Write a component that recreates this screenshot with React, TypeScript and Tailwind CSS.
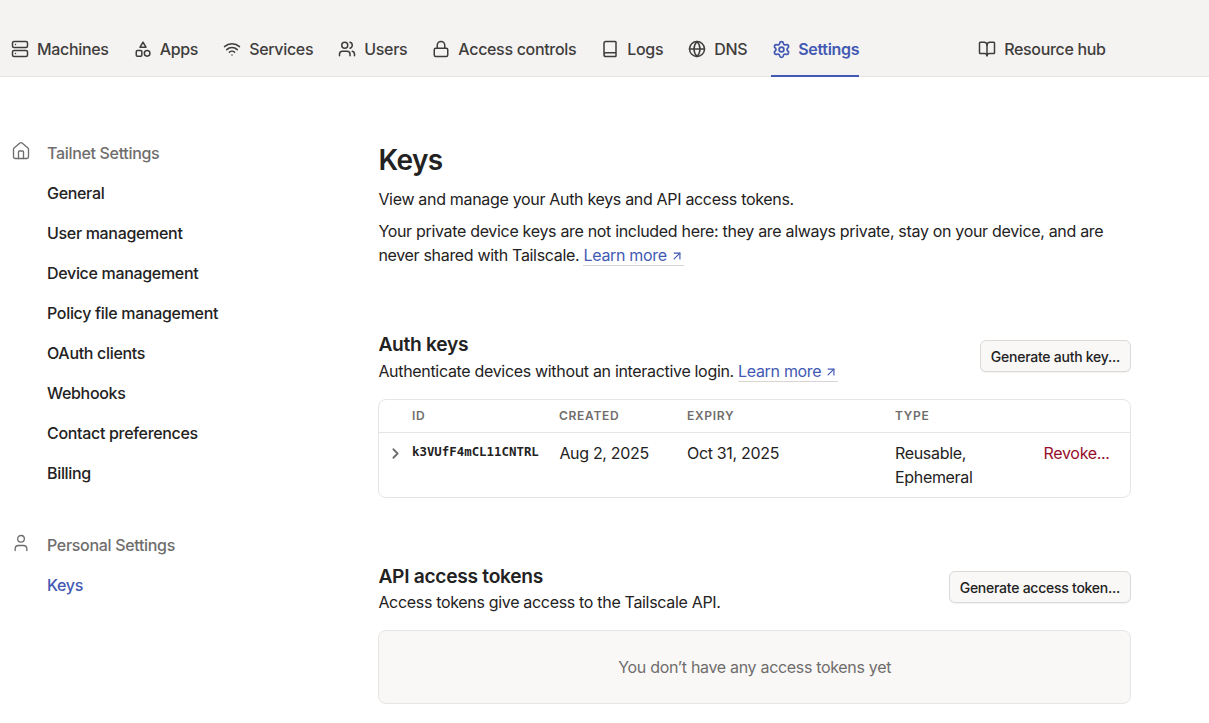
import { ArrowUpRight, Book, BookOpen, ChevronRight, Globe, House, Lock, Server, Settings, User, Users, Wifi } from "lucide-react";
import type { ReactNode } from "react";

function AppsIcon() {
  return (
    <svg width="18" height="18" viewBox="0 0 24 24" fill="none" stroke="currentColor" strokeWidth="2" strokeLinecap="round" strokeLinejoin="round">
      <path d="M12 3l4 6.5H8z" />
      <rect x="3" y="14" width="7.5" height="7.5" rx="1.5" />
      <circle cx="17.5" cy="17.75" r="3.75" />
    </svg>
  );
}

const nav: { label: string; icon: ReactNode; gap: string; active?: boolean }[] = [
  { label: "Machines", icon: <Server size={18} />, gap: "mr-6" },
  { label: "Apps", icon: <AppsIcon />, gap: "mr-6" },
  { label: "Services", icon: <Wifi size={18} />, gap: "mr-6" },
  { label: "Users", icon: <Users size={18} />, gap: "mr-6" },
  { label: "Access controls", icon: <Lock size={18} />, gap: "mr-6" },
  { label: "Logs", icon: <Book size={18} />, gap: "mr-6" },
  { label: "DNS", icon: <Globe size={18} />, gap: "mr-6" },
  { label: "Settings", icon: <Settings size={19} strokeWidth={2.2} />, gap: "mr-[118px]", active: true },
  { label: "Resource hub", icon: <BookOpen size={18} />, gap: "" },
];

const tailnetLinks = [
  "General",
  "User management",
  "Device management",
  "Policy file management",
  "OAuth clients",
  "Webhooks",
  "Contact preferences",
  "Billing",
];

function LearnMore() {
  return (
    <a className="inline-flex items-center gap-[3px] border-b border-[#d6d5d3] leading-[19px] text-[#4259b3]">
      Learn more
      <ArrowUpRight size={14} strokeWidth={2} />
    </a>
  );
}

function GenerateButton({ children }: { children: ReactNode }) {
  return (
    <button className="h-[32px] rounded-md border border-[#dcdad8] bg-[#faf8f7] px-[10px] text-[14px] font-medium tracking-[-0.018em] text-[#232222] shadow-[0_1px_1px_rgba(0,0,0,0.06)]">
      {children}
    </button>
  );
}

export default function App() {
  return (
    <div className="h-[723px] overflow-hidden bg-white text-[16px] tracking-[-0.02em] text-[#232222] [font-family:Inter,sans-serif]">
      <header className="flex h-[77px] items-end border-b border-[#e7e5e4] bg-[#f5f3f2] pl-[10px]">
        {nav.map((n) => (
          <a
            key={n.label}
            className={`-mb-px flex h-[54px] items-center gap-[7px] border-b-2 ${n.gap} ${
              n.active ? "border-[#4259b3] font-semibold text-[#4259b3]" : "border-transparent font-medium text-[#3f3d3c]"
            }`}
          >
            <span className="flex w-[20px] justify-center">{n.icon}</span>
            {n.label}
          </a>
        ))}
      </header>

      <div className="flex">
        <aside className="w-[378.4px] shrink-0 pt-[56px]">
          <div className="flex h-[40px] items-center text-[#6f6d6c]">
            <span className="flex w-[47px] justify-center pr-[6px] -translate-y-[2px]">
              <House size={20} strokeWidth={1.6} />
            </span>
            <span className="font-medium">Tailnet Settings</span>
          </div>
          {tailnetLinks.map((l) => (
            <div key={l} className="flex h-[40px] items-center pl-[47px] font-medium text-[#232222]">
              {l}
            </div>
          ))}
          <div className="mt-[32px] flex h-[40px] items-center text-[#6f6d6c]">
            <span className="flex w-[47px] justify-center pr-[6px] -translate-y-[2px]">
              <User size={20} strokeWidth={1.6} />
            </span>
            <span className="font-medium">Personal Settings</span>
          </div>
          <div className="flex h-[40px] items-center pl-[47px] font-medium text-[#4259b3]">Keys</div>
        </aside>

        <main className="w-[752.6px] pt-[63px]">
          <h1 className="text-[28px] leading-[40px] font-semibold tracking-[-0.02em] text-[#232222]">Keys</h1>
          <p className="mt-[7px] leading-[24px]">View and manage your Auth keys and API access tokens.</p>
          <p className="mt-[8px] leading-[24px]">
            Your private device keys are not included here: they are always private, stay on your device, and are{" "}
            <br />
            never shared with Tailscale. <LearnMore />
          </p>

          <section className="mt-[63px] flex items-end justify-between">
            <div>
              <h2 className="text-[19.2px] leading-[28px] font-semibold tracking-[-0.015em]">Auth keys</h2>
              <p className="mt-px leading-[24px]">
                Authenticate devices without an interactive login. <LearnMore />
              </p>
            </div>
            <div className="mb-[11px]">
              <GenerateButton>Generate auth key...</GenerateButton>
            </div>
          </section>

          <div className="mt-[16px] rounded-lg border border-[#e7e5e4]">
            <div className="grid h-[33px] grid-cols-[32.6px_147px_128px_208px_1fr] items-center border-b border-[#e7e5e4] text-[12px] font-semibold tracking-[0.06em] text-[#6f6d6c]">
              <span />
              <span>ID</span>
              <span>CREATED</span>
              <span>EXPIRY</span>
              <span>TYPE</span>
            </div>
            <div className="grid h-[64px] grid-cols-[32.6px_147.4px_127.6px_208px_148.6px_1fr] pt-[8px] leading-[24px]">
              <span className="flex h-[24px] items-center pl-[8px] text-[#6f6d6c]">
                <ChevronRight size={17} strokeWidth={2.5} />
              </span>
              <span className="h-[22px] text-[12.4px] leading-[22px] font-bold tracking-normal [font-family:'DejaVu_Sans_Mono',monospace]">k3VUfF4mCL11CNTRL</span>
              <span>Aug 2, 2025</span>
              <span>Oct 31, 2025</span>
              <span>
                Reusable,
                <br />
                Ephemeral
              </span>
              <span className="text-[#960d2b]">Revoke...</span>
            </div>
          </div>

          <section className="mt-[64px] flex items-end justify-between">
            <div>
              <h2 className="text-[19.2px] leading-[28px] font-semibold tracking-[-0.015em]">API access tokens</h2>
              <p className="leading-[24px]">Access tokens give access to the Tailscale API.</p>
            </div>
            <div className="mb-[11px]">
              <GenerateButton>Generate access token...</GenerateButton>
            </div>
          </section>

          <div className="mt-[16px] flex h-[74px] items-center justify-center rounded-lg border border-[#e7e5e4] bg-[#faf8f7] text-[#6f6d6c]">
            You don’t have any access tokens yet
          </div>
        </main>
      </div>
    </div>
  );
}
